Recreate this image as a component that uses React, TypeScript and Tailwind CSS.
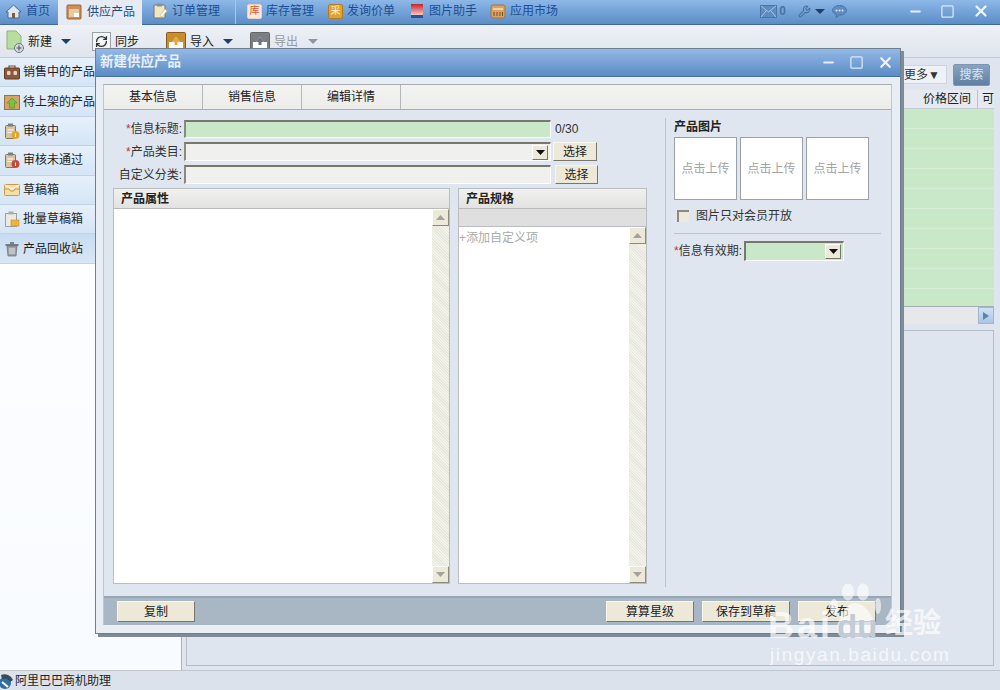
import React from 'react';
import { Minus, Square, X, Wrench, RefreshCw } from 'lucide-react';

const Caret = ({ className = 'border-t-[#1f3f66]' }: { className?: string }) => (
  <span className={`inline-block w-0 h-0 border-l-[5px] border-r-[5px] border-t-[5px] border-l-transparent border-r-transparent ${className}`} />
);

// small product icons, all on a 16x16 box
const Ico = ({ children, size = 16 }: { children: React.ReactNode; size?: number }) => (
  <svg width={size} height={size} viewBox="0 0 16 16" className="shrink-0">{children}</svg>
);

const HomeIcon = () => (
  <svg width="17" height="17" viewBox="0 0 17 17" className="shrink-0">
    <path d="M1 9 L8.5 2 L16 9 L14 9 L14 15 L3 15 L3 9 Z" fill="#dfe7ee" stroke="#4d6a86" />
    <rect x="7" y="10" width="3" height="5" fill="#7c5a3a" />
  </svg>
);

const SupplyIcon = () => (
  <Ico>
    <rect x="1" y="1" width="14" height="14" rx="1" fill="#cf8f58" stroke="#9a6236" />
    <rect x="3" y="5" width="10" height="8" fill="#e9c9a4" />
    <rect x="8" y="9" width="5" height="4" fill="#fff" />
  </Ico>
);

const OrderIcon = () => (
  <Ico>
    <rect x="2" y="2" width="11" height="13" rx="1" fill="#f1e6bf" stroke="#6d7780" />
    <rect x="5" y="0.5" width="5" height="3" fill="#8a8f94" />
    <path d="M8 13 L13 6 L15 8 L10 14 Z" fill="#fff" stroke="#c9b778" strokeWidth="0.6" />
  </Ico>
);

const KuIcon = () => (
  <span className="w-[15px] h-[15px] shrink-0 rounded-[2px] bg-[#f7e8dc] border border-[#e6d2c0] flex items-center justify-center text-[10px] leading-none text-[#d4552a]">库</span>
);

const CaiIcon = () => (
  <span className="w-[15px] h-[15px] shrink-0 rounded-[2px] bg-[#e0a233] border border-[#b9791f] flex items-center justify-center text-[10px] leading-none text-[#fff3c2]">采</span>
);

const PictureIcon = () => (
  <Ico>
    <defs>
      <linearGradient id="pic" x1="0" y1="0" x2="0" y2="1">
        <stop offset="0" stopColor="#c8202f" />
        <stop offset="1" stopColor="#f5c9c0" />
      </linearGradient>
    </defs>
    <rect x="2" y="1" width="12" height="11" fill="url(#pic)" />
    <rect x="2" y="12" width="12" height="3" fill="#2d4f9e" />
  </Ico>
);

const MarketIcon = () => (
  <Ico>
    <rect x="1" y="2" width="14" height="13" rx="2" fill="#d9a262" stroke="#a8723a" />
    <path d="M3 6 H13" stroke="#f5e2c2" strokeWidth="1.4" />
    <path d="M4 9 V13 M7 9 V13 M10 9 V13 M12.5 9 V13" stroke="#7a4d20" strokeWidth="1" />
  </Ico>
);

const BriefcaseIcon = () => (
  <Ico>
    <path d="M5 4 V2 H11 V4" fill="none" stroke="#7a4f33" strokeWidth="1.2" />
    <rect x="0.5" y="4" width="15" height="11" rx="1" fill="#8a5a3c" stroke="#5f3b24" />
    <rect x="3" y="7" width="3.5" height="4" rx="1" fill="#e7d3bd" />
    <rect x="9.5" y="7" width="3.5" height="4" rx="1" fill="#e7d3bd" />
  </Ico>
);

const BoxUpIcon = () => (
  <Ico>
    <rect x="0.5" y="1.5" width="15" height="14" fill="#d1a468" stroke="#9c7240" />
    <path d="M8 4 L13 9 H10.5 V14 H5.5 V9 H3 Z" fill="#7cc043" stroke="#4f8f25" strokeWidth="0.6" />
  </Ico>
);

const ClipBadgeIcon = ({ badge }: { badge: string }) => (
  <Ico>
    <rect x="1.5" y="2.5" width="10" height="13" rx="1" fill="#d9c3a0" stroke="#8a7350" />
    <rect x="4" y="0.5" width="5" height="3" fill="#77818a" />
    <path d="M3.5 7 H9.5 M3.5 9.5 H8" stroke="#fff" />
    <circle cx="11.5" cy="12" r="4" fill={badge} />
    <rect x="11" y="10.5" width="1" height="3.5" fill="#fff" />
  </Ico>
);

const MailIcon = () => (
  <Ico>
    <rect x="0.5" y="2.5" width="15" height="11" rx="1" fill="#f6dfa6" stroke="#c79a4a" />
    <path d="M1 7 H5 L6.5 9 H9.5 L11 7 H15" fill="none" stroke="#c9924a" />
    <path d="M1 3 L8 7 L15 3" fill="none" stroke="#fff" />
  </Ico>
);

const DraftsIcon = () => (
  <Ico>
    <rect x="1.5" y="2.5" width="11" height="13" fill="#eceade" stroke="#9aa0a6" />
    <rect x="4.5" y="0.5" width="5" height="3" fill="#a8adb2" />
    <rect x="7" y="9" width="8" height="6" fill="#e8b53e" stroke="#c38f20" strokeWidth="0.6" />
  </Ico>
);

const TrashIcon = () => (
  <Ico>
    <path d="M1.5 4 H14.5" stroke="#5f666d" strokeWidth="1.6" />
    <rect x="6" y="1" width="4" height="2" fill="#7a8087" />
    <path d="M3 5 H13 L12 15 H4 Z" fill="#9aa0a6" stroke="#666c72" strokeWidth="0.7" />
    <path d="M6 7 V13 M8 7 V13 M10 7 V13" stroke="#e2e5e8" />
  </Ico>
);

const NewIcon = () => (
  <svg width="21" height="24" viewBox="0 0 21 24" className="shrink-0">
    <path d="M2 1 H11 L16 6 V19 H2 Z" fill="#b9dc9f" stroke="#8fb27c" />
    <circle cx="14" cy="18" r="4.5" fill="#d8dde2" stroke="#6b7680" />
    <path d="M11.5 18 H16.5 M14 15.5 V20.5" stroke="#4b5563" strokeWidth="1.2" />
  </svg>
);

const TrayIcon = ({ gray }: { gray?: boolean }) => (
  <svg width="20" height="20" viewBox="0 0 20 20" className="shrink-0">
    <rect x="0.5" y="0.5" width="19" height="19" rx="1" fill={gray ? '#7b7f85' : '#c98d2d'} stroke={gray ? '#666' : '#8a5a1c'} />
    <path d="M3 10 V17 H17 V10 H14 L10 5 L6 10 Z" fill="#fff" />
    <path d="M10 5 L6 10 H8.5 V13 H11.5 V10 H14 Z" fill={gray ? '#6b7280' : '#e4a73d'} />
  </svg>
);

const tabs = [
  { text: '订单管理', w: 'w-[94px]', pl: 'pl-[10px]', icon: <OrderIcon /> },
  { text: '库存管理', w: 'w-[81px]', pl: 'pl-[11px]', icon: <KuIcon /> },
  { text: '发询价单', w: 'w-[81px]', pl: 'pl-[11px]', icon: <CaiIcon /> },
  { text: '图片助手', w: 'w-[82px]', pl: 'pl-[11px]', icon: <PictureIcon /> },
  { text: '应用市场', w: 'w-[80px]', pl: 'pl-[10px]', icon: <MarketIcon /> },
];

const sideItems = [
  { text: '销售中的产品', icon: <BriefcaseIcon /> },
  { text: '待上架的产品', icon: <BoxUpIcon /> },
  { text: '审核中', icon: <ClipBadgeIcon badge="#e0a92e" /> },
  { text: '审核未通过', icon: <ClipBadgeIcon badge="#c9473f" /> },
  { text: '草稿箱', icon: <MailIcon /> },
  { text: '批量草稿箱', icon: <DraftsIcon /> },
  { text: '产品回收站', icon: <TrashIcon /> },
];

const RaisedBtn = ({ children, className }: { children: React.ReactNode; className: string }) => (
  <div className={`flex items-center justify-center bg-[#ece9d8] border border-t-[#f8f7ee] border-l-[#f8f7ee] border-r-[#77776c] border-b-[#77776c] text-[#222] ${className}`}>
    {children}
  </div>
);

const ComboArrow = () => (
  <div className="absolute right-[2px] top-[1px] w-[16px] h-[15px] bg-[#ece9d8] border border-t-white border-l-white border-r-[#77776c] border-b-[#77776c] flex items-center justify-center">
    <svg width="9" height="5" viewBox="0 0 9 5"><path d="M0 0 H9 L4.5 5 Z" fill="#111" /></svg>
  </div>
);

const ScrollBtn = ({ up }: { up?: boolean }) => (
  <div className="h-[17px] bg-[#ece9d8] border border-t-white border-l-white border-r-[#8a8a80] border-b-[#8a8a80] flex items-center justify-center">
    <svg width="9" height="5" viewBox="0 0 9 5"><path d={up ? 'M0 5 H9 L4.5 0 Z' : 'M0 0 H9 L4.5 5 Z'} fill="#a3a39a" /></svg>
  </div>
);

const Scrollbar = () => (
  <div className="w-[17px] shrink-0 flex flex-col justify-between bg-[repeating-linear-gradient(45deg,#f3f3ea_0px,#f3f3ea_1px,#e6e8dd_1px,#e6e8dd_2px)]">
    <ScrollBtn up />
    <ScrollBtn />
  </div>
);

const Field = ({ label, star, className, children }: { label: string; star?: boolean; className: string; children?: React.ReactNode }) => (
  <div className="flex items-center">
    <span className="w-[69px] text-right text-[#333] whitespace-nowrap leading-none">
      {star && <span className="text-[#c0392b]">*</span>}
      {label}:
    </span>
    <div className={`relative ml-[2px] w-[367px] border-t-2 border-l-2 border-t-[#77776c] border-l-[#8a8a80] border-b border-r border-b-white border-r-white ${className}`}>
      {children}
    </div>
  </div>
);

const PanelHead = ({ text }: { text: string }) => (
  <div className="h-[20px] shrink-0 bg-gradient-to-b from-[#f1f1ef] to-[#e2e2e0] border-b border-[#b9b9b6] pl-[7px] flex items-center font-bold text-[#222]">
    {text}
  </div>
);

export default function App() {
  return (
    <div className="relative w-[1000px] h-[690px] overflow-hidden flex flex-col text-[12px] bg-[#dfe5ee] font-['Liberation_Sans','Noto_Sans_CJK_SC',sans-serif]">
      {/* top tabs */}
      <div className="h-[25px] shrink-0 flex items-stretch bg-gradient-to-b from-[#8db8e8] to-[#5b8dc6] border-b border-[#3f6a9e] text-[#1b4e96]">
        <div className="w-[58px] flex items-center gap-[4px] pl-[5px] pb-[2px]">
          <HomeIcon />
          <span>首页</span>
        </div>
        <div className="w-[84px] h-[25px] flex items-center gap-[5px] pl-[8px] pb-[2px] bg-[#e6ebf3] text-[#1f4a85]">
          <SupplyIcon />
          <span>供应产品</span>
        </div>
        {tabs.map((t, i) => (
          <div key={t.text} className={`${t.w} ${t.pl} flex items-center gap-[4px] pb-[2px] ${i === 0 ? 'border-r border-[#a9c6e6]' : ''}`}>
            {t.icon}
            <span>{t.text}</span>
          </div>
        ))}
        <div className="flex-1 flex items-center justify-end pb-[2px] text-[#48709f]">
          <svg width="17" height="13" viewBox="0 0 17 13" className="shrink-0">
            <rect x="0.5" y="0.5" width="16" height="12" fill="#5f8cc0" stroke="#4a74a6" />
            <path d="M1 1 L8.5 7 L16 1 M1 12 L6 6 M16 12 L11 6" fill="none" stroke="#a9c5e4" />
          </svg>
          <span className="ml-[2px] mr-[12px] font-bold text-[#4a719e]">0</span>
          <Wrench size={13} className="text-[#48709f]" />
          <span className="ml-[4px] mr-[7px] flex"><Caret /></span>
          <svg width="15" height="13" viewBox="0 0 15 13" className="shrink-0 mr-[61px]">
            <path d="M7.5 0.5 C11.5 0.5 14.5 2.8 14.5 5.5 C14.5 8.2 11.5 10 7.5 10 L4 12.5 L4.5 9.5 C2 8.8 0.5 7.2 0.5 5.5 C0.5 2.8 3.5 0.5 7.5 0.5 Z" fill="#5f8cc0" stroke="#4a74a6" />
            <circle cx="4.5" cy="5.5" r="1" fill="#dbe7f4" />
            <circle cx="7.5" cy="5.5" r="1" fill="#dbe7f4" />
            <circle cx="10.5" cy="5.5" r="1" fill="#dbe7f4" />
          </svg>
          <Minus size={15} strokeWidth={3} className="text-[#e6eef8] mr-[17px]" />
          <Square size={15} strokeWidth={2} className="text-[#dde8f4] mr-[17px]" />
          <X size={18} strokeWidth={3} className="text-[#eef4fb] mr-[10px]" />
        </div>
      </div>

      {/* toolbar */}
      <div className="h-[33px] shrink-0 flex items-center pl-[5px] pt-[1px] bg-gradient-to-b from-[#eef1f5] to-[#dfe5ee] border-b border-[#c3cad3] text-[#222]">
        <NewIcon />
        <span className="ml-[2px]">新建</span>
        <span className="ml-[9px] flex"><Caret /></span>
        <span className="ml-[21px] w-[19px] h-[19px] bg-[#f2f4f6] border border-[#9aa0a6] flex items-center justify-center">
          <RefreshCw size={13} strokeWidth={2.5} className="text-[#333]" />
        </span>
        <span className="ml-[4px]">同步</span>
        <span className="ml-[27px] flex"><TrayIcon /></span>
        <span className="ml-[4px]">导入</span>
        <span className="ml-[9px] flex"><Caret /></span>
        <span className="ml-[17px] flex"><TrayIcon gray /></span>
        <span className="ml-[4px] text-[#999]">导出</span>
        <span className="ml-[10px] flex"><Caret className="border-t-[#8d97a3]" /></span>
      </div>

      <div className="flex-1 min-h-0 flex">
        {/* side menu */}
        <div className="w-[182px] shrink-0 bg-gradient-to-b from-white to-[#f8fbff] border-r border-[#a9b1ba] flex flex-col">
          {sideItems.map((s, i) => (
            <div
              key={s.text}
              className={`h-[29.4px] flex items-center gap-[3px] pl-[4px] border-b border-[#c3d3e6] text-[#222] whitespace-nowrap ${
                i === 6 ? 'bg-gradient-to-b from-[#c8dcf2] to-[#d8e7f6]' : 'bg-gradient-to-b from-[#e6f0fb] to-[#d5e5f6]'
              }`}
            >
              {s.icon}
              <span>{s.text}</span>
            </div>
          ))}
        </div>

        {/* right list behind the dialog */}
        <div className="flex-1 min-w-0 flex flex-col pl-[4px] pr-[6px] pt-[6px] pb-[4px]">
          <div className="h-[26px] shrink-0 flex justify-end items-start pt-[1px] pr-[4px]">
            <div className="w-[44px] h-[19px] bg-[#eef1f5] border border-[#cfd5dc] flex items-center text-[#333] mr-[6px]">更多▼</div>
            <div className="w-[37px] h-[22px] -mt-[1px] rounded-[2px] bg-gradient-to-b from-[#8aa4c0] to-[#5f80a4] border border-[#7d95ae] flex items-center justify-center text-[#dbe6f1]">搜索</div>
          </div>
          <div className="h-[19px] shrink-0 flex justify-end items-center bg-[#e6eaf0] border-b border-[#c5ccd4] text-[#222]">
            <span className="w-[64px] pl-[9px] border-r border-[#bcc3cc]">价格区间</span>
            <span className="w-[16px] pl-[4px]">可</span>
          </div>
          <div className="h-[197px] shrink-0 bg-[#c9e8c8] bg-[repeating-linear-gradient(180deg,#c9e8c8_0px,#c9e8c8_19px,#d6ecd5_19px,#d6ecd5_20px)]" />
          <div className="h-[18px] shrink-0 flex justify-end bg-[#e6e8ea] border-t border-[#a6adb4]">
            <div className="w-[16px] bg-gradient-to-b from-[#cfe1f4] to-[#a9c6e4] border border-[#9db7d2] flex items-center justify-center">
              <span className="w-0 h-0 border-t-[4px] border-b-[4px] border-l-[6px] border-t-transparent border-b-transparent border-l-[#5d83ab]" />
            </div>
          </div>
          <div className="flex-1 mt-[6px] border border-[#b5bcc4] bg-[#dfe5ee]" />
        </div>
      </div>

      {/* status bar */}
      <div className="h-[20px] shrink-0 flex items-center bg-[#dce2eb] border-t border-[#bfc6cf] text-[#222]">
        <svg width="15" height="16" viewBox="0 0 15 16" className="shrink-0">
          <circle cx="5" cy="10" r="6" fill="#2f6fa8" />
          <path d="M1 2 A9 9 0 0 1 13 7 L10 9 A6 6 0 0 0 2 6 Z" fill="#3a4a5a" />
          <path d="M2 9 L8 14" stroke="#fff" strokeWidth="2" />
        </svg>
        <span>阿里巴巴商机助理</span>
      </div>

      {/* dialog */}
      <div className="absolute left-[95px] top-[48px] w-[806px] h-[586px] flex flex-col bg-[#e9eef4] border border-[#6f7f90] shadow-[3px_3px_0_#7f8a96]">
        <div className="h-[28px] shrink-0 flex items-center justify-between pl-[4px] pr-[6px] bg-gradient-to-b from-[#93b9e5] to-[#5b8cc6] border-b border-[#46709f]">
          <span className="font-bold text-[13.5px] text-[#e8f0f8]">新建供应产品</span>
          <div className="flex items-center gap-[13px]">
            <Minus size={15} strokeWidth={3} className="text-[#e6eef8]" />
            <Square size={15} strokeWidth={2} className="text-[#dde8f4]" />
            <X size={17} strokeWidth={3} className="text-[#eef4fb]" />
          </div>
        </div>

        <div className="flex-1 min-h-0 flex flex-col mt-[7px] ml-[7px] mr-[8px] mb-[8px] border-t border-[#a8acb0] border-x border-x-[#c2c7cd]">
          {/* dialog tabs */}
          <div className="h-[25px] shrink-0 flex bg-gradient-to-b from-[#f3f3f2] to-[#ececea] border-b border-[#a9adb1] text-[#222]">
            {['基本信息', '销售信息', '编辑详情'].map((t) => (
              <div key={t} className="w-[99px] flex items-center justify-center border-r border-[#b4b7ba]">{t}</div>
            ))}
          </div>

          <div className="flex-1 min-h-0 flex bg-[#dfe6ef]">
            {/* left form */}
            <div className="w-[561px] shrink-0 flex flex-col pl-[9px] pt-[9px] pb-[12px]">
              <div className="flex flex-col gap-[4px]">
                <div className="flex items-center h-[19px]">
                  <Field label="信息标题" star className="h-[18px] bg-[#c8e8c8]" />
                  <span className="ml-[4px] text-[#333]">0/30</span>
                </div>
                <div className="flex items-center h-[19px]">
                  <Field label="产品类目" star className="h-[19px] bg-[#f0f0ee]"><ComboArrow /></Field>
                  <RaisedBtn className="ml-[2px] w-[44px] h-[19px]">选择</RaisedBtn>
                </div>
                <div className="flex items-center h-[19px]">
                  <Field label="自定义分类" className="h-[19px] bg-[#f0f0ee]" />
                  <RaisedBtn className="ml-[4px] w-[43px] h-[19px]">选择</RaisedBtn>
                </div>
              </div>

              <div className="flex-1 min-h-0 flex gap-[8px] mt-[4px]">
                <div className="w-[337px] flex flex-col border border-[#b9bdc1] bg-white">
                  <PanelHead text="产品属性" />
                  <div className="flex-1 min-h-0 flex justify-end"><Scrollbar /></div>
                </div>
                <div className="w-[189px] flex flex-col border border-[#b9bdc1] bg-white">
                  <PanelHead text="产品规格" />
                  <div className="h-[18px] shrink-0 bg-[#dedfde] border-b border-[#b9bdc1]" />
                  <div className="flex-1 min-h-0 flex justify-between">
                    <span className="text-[#aaa] pt-[2px]">+添加自定义项</span>
                    <Scrollbar />
                  </div>
                </div>
              </div>
            </div>

            <div className="w-px shrink-0 bg-[#bcc3cb] mt-[8px] mb-[9px]" />

            {/* right column */}
            <div className="flex-1 min-w-0 pl-[8px] pt-[8px] pr-[10px]">
              <div className="font-bold text-[#222] h-[19px] leading-[19px]">产品图片</div>
              <div className="flex gap-[3px]">
                {[0, 1, 2].map((i) => (
                  <div key={i} className="w-[63px] h-[63px] bg-white border border-[#9aa0a5] flex items-center justify-center text-[#a3a3a3]">点击上传</div>
                ))}
              </div>
              <div className="flex items-center mt-[7px] pl-[3px] text-[#333]">
                <span className="w-[12px] h-[12px] bg-[#efe9da] border-t-2 border-l-2 border-t-[#8a8a80] border-l-[#8a8a80]" />
                <span className="ml-[7px]">图片只对会员开放</span>
              </div>
              <div className="h-px bg-[#bcc3cb] mt-[8px]" />
              <div className="flex items-center mt-[7px]">
                <span className="text-[#333] whitespace-nowrap"><span className="text-[#c0392b]">*</span>信息有效期:</span>
                <div className="relative ml-[2px] w-[100px] h-[20px] bg-[#c8e8c8] border-t-2 border-l-2 border-t-[#77776c] border-l-[#77776c] border-b border-r border-b-white border-r-white">
                  <ComboArrow />
                </div>
              </div>
            </div>
          </div>

          {/* dialog footer */}
          <div className="h-[29px] shrink-0 flex items-center bg-[#a9b6c3] border-t-2 border-[#98a5b2] pl-[13px] pr-[15px] text-[#111]">
            <RaisedBtn className="w-[78px] h-[21px]">复制</RaisedBtn>
            <RaisedBtn className="ml-auto w-[88px] h-[21px]">算算星级</RaisedBtn>
            <RaisedBtn className="ml-[8px] w-[88px] h-[21px]">保存到草稿</RaisedBtn>
            <RaisedBtn className="ml-[8px] w-[78px] h-[21px]">发布</RaisedBtn>
          </div>
        </div>
      </div>

      {/* watermark */}
      <div className="absolute left-[768px] top-[582px] w-[220px] h-[90px] text-white/70 pointer-events-none">
        <svg width="64" height="60" viewBox="0 0 64 60" className="absolute left-[56px] top-0 text-white">
          <g fill="currentColor" fillOpacity="0.6">
            <ellipse cx="10" cy="25" rx="4" ry="8" />
            <ellipse cx="24" cy="10" rx="6" ry="8.5" />
            <ellipse cx="39" cy="10" rx="6" ry="8.5" />
            <ellipse cx="54" cy="24" rx="3" ry="8" />
            <path d="M31 21 C40 21 46 30 50 40 C53 50 47 56 40 56 C34 56 28 56 22 56 C15 56 11 50 14 41 C17 32 23 21 31 21 Z" />
          </g>
        </svg>
        <span className="absolute left-[0px] top-[24px] text-[36px] leading-[40px] font-bold tracking-[3px]">Bai</span>
        <span className="absolute left-[69px] top-[25px] text-[33px] leading-[40px] font-bold text-[#c3cbd5]">du</span>
        <span className="absolute left-[117px] top-[26px] text-[28px] leading-[32px] font-bold">经验</span>
        <span className="absolute left-[2px] top-[61px] text-[19px] leading-[24px] tracking-[1.6px]">jingyan.baidu.com</span>
      </div>
    </div>
  );
}
